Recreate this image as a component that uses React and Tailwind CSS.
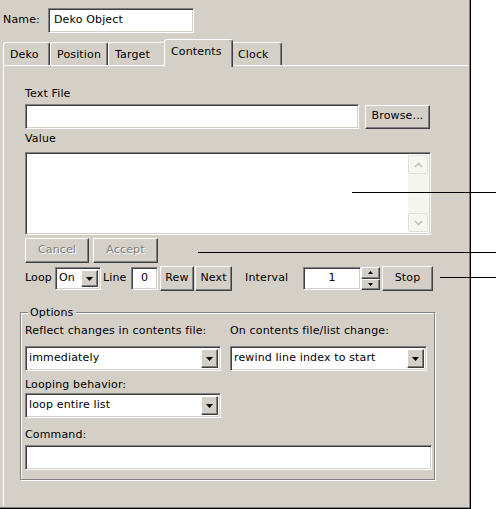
import React from 'react'

const sunken =
  'bg-white border border-t-[#808080] border-l-[#808080] border-b-white border-r-white shadow-[inset_1px_1px_0_#404040,inset_-1px_-1px_0_#d4d0c8]'
const raised =
  'bg-[#d4d0c8] border border-t-white border-l-white border-b-[#404040] border-r-[#404040] shadow-[inset_-1px_-1px_0_#808080]'

const Button = ({ children, className = '', disabled = false }) => (
  <div
    className={[
      raised,
      'flex items-center justify-center',
      disabled ? 'text-[#808080] [text-shadow:1px_1px_0_#fff]' : 'text-black',
      className,
    ].join(' ')}
  >
    {children}
  </div>
)

const Arrow = ({ className = '' }) => (
  <div className={[raised, 'flex items-center justify-center', className].join(' ')}>
    <svg width="7" height="4" viewBox="0 0 7 4">
      <path d="M0 0h7L3.5 4z" fill="#000" />
    </svg>
  </div>
)

const Select = ({ value, className = '' }) => (
  <div className={[sunken, 'flex items-stretch p-[2px]', className].join(' ')}>
    <div className="flex-1 flex items-center pl-[1px] overflow-hidden whitespace-nowrap">{value}</div>
    <Arrow className="w-[17px]" />
  </div>
)

const Tab = ({ label, active = false, w }) =>
  active ? (
    <div
      className="relative z-10 -mx-[2px] h-[28px] pt-[5px] pl-[6px] bg-[#d4d0c8] border-l border-t border-r border-l-white border-t-white border-r-[#404040] rounded-t-[3px] shadow-[inset_-1px_0_0_#808080]"
      style={{ width: w }}
    >
      <div className="h-[14px] leading-[14px]">{label}</div>
    </div>
  ) : (
    <div
      className="mt-[3px] h-[23px] pt-[5px] pl-[6px] bg-[#d4d0c8] border-l border-t border-r border-l-white border-t-white border-r-[#404040] rounded-t-[3px] shadow-[inset_-1px_0_0_#808080]"
      style={{ width: w }}
    >
      <div className="h-[14px] leading-[14px]">{label}</div>
    </div>
  )

const Chevron = ({ up }) => (
  <svg width="9" height="6" viewBox="0 0 9 6">
    <path d={up ? 'M1 5l3.5-3.5L8 5' : 'M1 1l3.5 3.5L8 1'} stroke="#c5c2b2" strokeWidth="1.6" fill="none" />
  </svg>
)

export default function App() {
  return (
    <div className="relative w-[496px] h-[509px] bg-white font-['DejaVu_Sans',sans-serif] text-[11px] tracking-[0.15px] text-black">
      <div className="w-[471px] h-[509px] flex flex-col bg-[#d4d0c8] border-r border-b border-black shadow-[inset_-1px_-1px_0_#808080]">
        {/* Name */}
        <div className="flex items-center pt-[8px] pl-[3px]">
          <div className="w-[45px]">Name:</div>
          <div className={[sunken, 'w-[146px] h-[25px] flex items-center pl-[5px]'].join(' ')}>Deko Object</div>
        </div>

        {/* Tabs */}
        <div className="flex items-start h-[26px] mt-[6px] pl-[3px]">
          <Tab label="Deko" w={47} />
          <Tab label="Position" w={58} />
          <Tab label="Target" w={58} />
          <Tab label="Contents" w={69} active />
          <Tab label="Clock" w={51} />
        </div>

        {/* Panel */}
        <div className="flex-1 ml-[3px] mr-[2px] mb-[2px] border-t border-l border-white pl-[16px]">
          <div className="pl-[5px]">
            <div className="mt-[21px] h-[14px] leading-[14px]">Text File</div>
            <div className="flex items-center mt-[3px]">
              <div className={[sunken, 'w-[334px] h-[25px]'].join(' ')} />
              <Button className="ml-[6px] w-[65px] h-[24px]">Browse...</Button>
            </div>
            <div className="mt-[3px] h-[14px] leading-[14px]">Value</div>
            <div className={[sunken, 'mt-[6px] w-[406px] h-[83px] flex p-[2px]'].join(' ')}>
              <div className="flex-1" />
              <div className="w-[20px] bg-[#f5f4ef] flex flex-col justify-between">
                <div className="h-[19px] border border-[#e3e1d7] bg-[#f7f6f1] rounded-[2px] flex items-center justify-center">
                  <Chevron up />
                </div>
                <div className="h-[19px] border border-[#e3e1d7] bg-[#f7f6f1] rounded-[2px] flex items-center justify-center">
                  <Chevron />
                </div>
              </div>
            </div>

            <div className="flex mt-[3px]">
              <Button disabled className="w-[64px] h-[25px]">Cancel</Button>
              <Button disabled className="ml-[4px] w-[65px] h-[25px]">Accept</Button>
            </div>

            <div className="flex items-center mt-[3px] h-[25px]">
              <div className="w-[30px]">Loop</div>
              <Select value="On" className="w-[46px] h-[23px]" />
              <div className="w-[30px] pl-[2px]">Line</div>
              <div className={[sunken, 'w-[27px] h-[23px] flex items-center justify-center'].join(' ')}>0</div>
              <Button className="ml-[2px] w-[34px] h-[25px]">Rew</Button>
              <Button className="ml-[1px] w-[37px] h-[25px]">Next</Button>
              <div className="ml-[13px] w-[58px]">Interval</div>
              <div className={[sunken, 'w-[58px] h-[23px] flex items-center justify-center'].join(' ')}>1</div>
              <div className="w-[19px] h-[23px] flex flex-col">
                <div className={[raised, 'flex-1 flex items-center justify-center'].join(' ')}>
                  <svg width="5" height="3" viewBox="0 0 5 3"><path d="M2.5 0L5 3H0z" fill="#000" /></svg>
                </div>
                <div className={[raised, 'flex-1 flex items-center justify-center'].join(' ')}>
                  <svg width="5" height="3" viewBox="0 0 5 3"><path d="M0 0h5L2.5 3z" fill="#000" /></svg>
                </div>
              </div>
              <Button className="ml-[2px] w-[51px] h-[25px]">Stop</Button>
            </div>
          </div>

          {/* Options group */}
          <div className="mt-[21px] w-[415px] h-[168px] border border-[#808080] shadow-[inset_1px_1px_0_#fff,1px_1px_0_#fff] px-[4px]">
            <div className="-mt-[7px] h-[14px] leading-[14px] flex">
              <span className="ml-[3px] px-[2px] bg-[#d4d0c8]">Options</span>
            </div>
            <div className="flex mt-[4px]">
              <div className="w-[196px]">
                <div className="h-[14px] leading-[14px]">Reflect changes in contents file:</div>
                <Select value="immediately" className="mt-[8px] w-[196px] h-[25px]" />
              </div>
              <div className="ml-[9px] w-[197px]">
                <div className="h-[14px] leading-[14px]">On contents file/list change:</div>
                <Select value="rewind line index to start" className="mt-[8px] w-[197px] h-[25px]" />
              </div>
            </div>
            <div className="mt-[7px] h-[14px] leading-[14px]">Looping behavior:</div>
            <Select value="loop entire list" className="mt-[1px] w-[196px] h-[25px]" />
            <div className="mt-[10px] h-[14px] leading-[14px]">Command:</div>
            <div className={[sunken, 'mt-[3px] w-[407px] h-[25px]'].join(' ')} />
          </div>
        </div>
      </div>

      {/* annotation leaders */}
      <div className="absolute left-[352px] top-[192px] w-[144px] h-px bg-black" />
      <div className="absolute left-[198px] top-[252px] w-[298px] h-px bg-black" />
      <div className="absolute left-[440px] top-[277px] w-[56px] h-px bg-black" />
    </div>
  )
}
